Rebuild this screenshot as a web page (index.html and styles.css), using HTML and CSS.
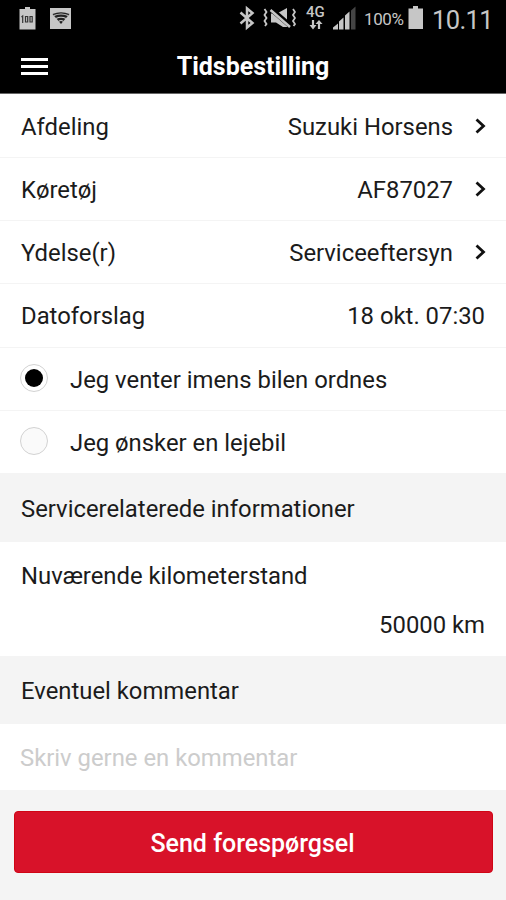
FILE: index.html
```html
<!DOCTYPE html>
<html lang="da">
<head>
<meta charset="utf-8">
<title>Tidsbestilling</title>
<link rel="stylesheet" href="styles.css">
</head>
<body>
<div class="status">
  <svg class="status-left" width="60" height="38" viewBox="0 0 60 38">
    <path d="M6 7h5v2h5.500v20.500H.5V9H6z" fill="#c6c6c6"/>
    <path d="M2.500 17l1.200-1v7M6.500 16.500h2.200v5.500H6.500zM11 16.500h2.200v5.500H11z" fill="none" stroke="#333" stroke-width="1.200"/>
    <path d="M31 8h21v21H31z" fill="#c6c6c6"/>
    <path d="M33.500 14Q42 10.500 50.500 14L42 24z" fill="#222"/>
    <path d="M35 15.500Q42 12.500 49 15.500M37 18.500Q42 16 47 18.500M39.500 21.500Q42 19.500 44.500 21.500" fill="none" stroke="#c6c6c6" stroke-width="1.100"/>
  </svg>
  <svg class="bluetooth" width="16" height="38" viewBox="0 0 16 38"><path d="M1.500 12.500L13.500 23 8 27.500V8.500l5.500 4.500L1.500 23.500" fill="none" stroke="#c6c6c6" stroke-width="2.500"/></svg>
  <svg class="mute" width="34" height="38" viewBox="0 0 34 38">
    <path d="M9 13.500h6l10-5.500v19h-4l-7-4.500H9z" fill="#c6c6c6"/>
    <path d="M9 9L28.500 26" stroke="#000" stroke-width="5"/>
    <path d="M8.500 10L28 27" stroke="#c6c6c6" stroke-width="2.500"/>
    <path d="M2.500 9l2 3-2 3 2 3-2 3 2 3-1.500 2M31 9l2 3-2 3 2 3-2 3 2 3-1.500 2" fill="none" stroke="#c6c6c6" stroke-width="1.800"/>
  </svg>
  <div class="network"><span class="network-label">4G</span>
    <svg width="14" height="10" viewBox="0 0 14 10"><path d="M4 0v6M10 9V3" stroke="#c6c6c6" stroke-width="2.200"/><path d="M.5 5h7L4 9.500zM6.500 4h7L10 0z" fill="#c6c6c6"/></svg>
  </div>
  <svg class="signal" width="24" height="38" viewBox="0 0 24 38"><path d="M0 29.500v-2l5-4v6zM6 29.500v-8l4.500-4v12zM12 29.500V15.500l4.500-4v18z" fill="#c6c6c6"/><path d="M18 29.500V10.500l4.500-4v23z" fill="#444"/></svg>
  <span class="percent">100%</span>
  <svg class="battery" width="16" height="38" viewBox="0 0 16 38"><path d="M5 6h5v2.500h5V29H.5V8.500H5z" fill="#c6c6c6"/></svg>
  <span class="clock">10.11</span>
</div>
<header class="header">
  <div class="menu"><i></i><i></i><i></i></div>
  <h1 class="title">Tidsbestilling</h1>
</header>
<main>
  <div class="row"><span>Afdeling</span><span class="value">Suzuki Horsens</span><svg class="chevron" width="12" height="18" viewBox="0 0 12 18"><path d="M1.500 2.500L8.500 9l-7 6.500" fill="none" stroke="#111" stroke-width="2.800"/></svg></div>
  <div class="row"><span>Køretøj</span><span class="value">AF87027</span><svg class="chevron" width="12" height="18" viewBox="0 0 12 18"><path d="M1.500 2.500L8.500 9l-7 6.500" fill="none" stroke="#111" stroke-width="2.800"/></svg></div>
  <div class="row"><span>Ydelse(r)</span><span class="value">Serviceeftersyn</span><svg class="chevron" width="12" height="18" viewBox="0 0 12 18"><path d="M1.500 2.500L8.500 9l-7 6.500" fill="none" stroke="#111" stroke-width="2.800"/></svg></div>
  <div class="row"><span>Datoforslag</span><span class="value">18 okt. 07:30</span></div>
  <div class="row"><span class="radio checked"></span><span>Jeg venter imens bilen ordnes</span></div>
  <div class="row last"><span class="radio"></span><span>Jeg ønsker en lejebil</span></div>
  <h2 class="section">Servicerelaterede informationer</h2>
  <div class="mileage"><span>Nuværende kilometerstand</span><span class="km">50000 km</span></div>
  <h2 class="section comment-title">Eventuel kommentar</h2>
  <div class="comment">Skriv gerne en kommentar</div>
</main>
<footer class="footer"><button class="send">Send forespørgsel</button></footer>
</body>
</html>
```
FILE: styles.css
```css
* { box-sizing: border-box; }
body {
  margin: 0;
  width: 506px;
  height: 900px;
  overflow: hidden;
  background: #f4f4f4;
  color: #1b1b1b;
  font: 400 23.85px/30px Roboto, sans-serif;
}
svg { display: block; flex: none; }
.status {
  display: flex;
  height: 38px;
  padding-left: 19px;
  background: #000;
  color: #c6c6c6;
  white-space: nowrap;
}
.bluetooth { margin-left: 160px; }
.mute { margin-left: 7px; }
.network { width: 20px; margin-left: 10px; padding-top: 5px; }
.network-label { display: block; height: 15px; font: 500 15px/15px Roboto, sans-serif; }
.network svg { margin-left: 3px; }
.signal { margin-left: 7px; }
.percent { width: 41px; margin-left: 7px; font-size: 17px; line-height: 39px; letter-spacing: -.4px; }
.battery { margin-left: 3px; }
.clock { margin-left: 8px; font-size: 25.5px; line-height: 40px; letter-spacing: -.6px; }
.header {
  display: grid;
  grid-template-columns: 48px 1fr 48px;
  align-items: center;
  height: 56px;
  background: #000;
  border-bottom: 1px solid #666;
}
.menu { display: grid; gap: 4px; width: 27px; margin: 1px 0 0 21px; }
.menu i { height: 3px; background: #fff; }
.title { margin: 0; padding-top: 3px; color: #fff; font-size: 25px; font-weight: 700; line-height: 30px; text-align: center; }
.row {
  display: flex;
  align-items: center;
  height: 63.2px;
  padding: 2px 21px 0;
  background: #fff;
  border-bottom: 1px solid #f4f4f4;
}
.row:first-child { height: 64px; padding-top: 3px; }
.row.last { border-bottom: 0; height: 62.2px; }
.value { margin-left: auto; }
.chevron { margin: -2px -2px 0 22px; }
.radio {
  display: grid;
  place-items: center;
  width: 28px;
  height: 28px;
  margin: -3px 22px 0 -1px;
  border: 1px solid #d2d2d2;
  border-radius: 50%;
  background: #fafafa;
}
.checked { background: #fff; }
.checked::before { content: ""; width: 18px; height: 18px; border-radius: 50%; background: #000; }
.section { display: flex; align-items: center; height: 69px; margin: 0; padding: 3px 21px 0; background: #f4f4f4; font-size: 23.85px; font-weight: 400; }
.mileage { display: flex; flex-direction: column; gap: 19px; height: 114px; padding: 19px 21px 0; background: #fff; }
.km { align-self: flex-end; }
.comment-title { height: 68px; }
.comment { height: 66px; padding: 19px 20px; background: #fff; color: #ccc; }
.footer { padding: 21px 14px; }
.send { display: block; width: 479px; height: 62px; padding: 4px 2px 0 0; border: 1px solid #d00515; border-radius: 4px; background: #d81229; color: #fff; font: 500 25px/30px Roboto, sans-serif; }
```
